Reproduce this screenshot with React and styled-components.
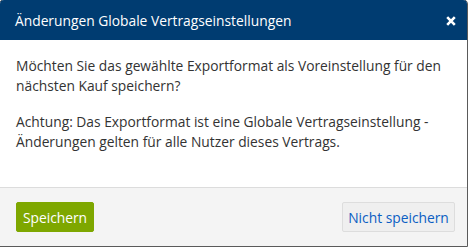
import React from "react";
import styled, { createGlobalStyle } from "styled-components";

const Global = createGlobalStyle`
  html, body { margin: 0; padding: 0; background: #ffffff; }
  body { font-family: "Open Sans", "Noto Sans", sans-serif; }
`;

const Dialog = styled.div`
  box-sizing: border-box;
  width: 469px;
  height: 248px;
  margin: -1px 0 0 -1px;
  border: 1px solid #5a5a5a;
  border-radius: 5px 5px 0 0;
  overflow: hidden;
  display: flex;
  flex-direction: column;
  background: #ffffff;
`;

const Header = styled.div`
  height: 40px;
  flex: none;
  background: #003c71;
  display: flex;
  align-items: center;
  justify-content: space-between;
  padding: 0 11px 0 15px;
`;

const Title = styled.h1`
  margin: 0;
  font-size: 13.8px;
  font-weight: 400;
  color: #ffffff;
  padding-top: 1px;
`;

const Close = styled.button`
  border: 0;
  background: transparent;
  padding: 0;
  width: 10px;
  height: 10px;
  margin-top: 1px;
  display: flex;
  cursor: pointer;
`;

const Body = styled.div`
  flex: 1;
  padding: 16px 15px 0 16px;
  border-bottom: 1px solid #dcdcdc;
`;

const Para = styled.p`
  margin: 0 0 16px;
  font-size: 13.8px;
  line-height: 20px;
  color: #333333;
`;

const Footer = styled.div`
  height: 58px;
  flex: none;
  background: #f4f4f4;
  display: flex;
  align-items: flex-start;
  justify-content: space-between;
  padding: 14px 12px 0 16px;
  box-sizing: border-box;
`;

const Button = styled.button`
  height: 30px;
  box-sizing: border-box;
  padding: 0;
  border-radius: 2px;
  font-family: "Open Sans", "Noto Sans", sans-serif;
  font-size: 13.8px;
  white-space: nowrap;
  cursor: pointer;
  border: 1px solid ${(p) => (p.$primary ? "#7ea700" : "#dddddd")};
  background: ${(p) => (p.$primary ? "#7ea700" : "#efefef")};
  color: ${(p) => (p.$primary ? "#ffffff" : "#0b5ec3")};
  width: ${(p) => p.$w}px;
`;

export default function App() {
  return (
    <>
      <Global />
      <Dialog>
        <Header>
          <Title>Änderungen Globale Vertragseinstellungen</Title>
          <Close aria-label="Schließen">
            <svg width="10" height="10" viewBox="0 0 10 10">
              <path d="M1.2 1.2 L8.8 8.8 M8.8 1.2 L1.2 8.8" stroke="#ffffff" strokeWidth="2.6" strokeLinecap="butt" />
            </svg>
          </Close>
        </Header>
        <Body>
          <Para>
            Möchten Sie das gewählte Exportformat als Voreinstellung für den nächsten Kauf speichern?
          </Para>
          <Para>
            Achtung: Das Exportformat ist eine Globale Vertragseinstellung - Änderungen gelten für alle Nutzer dieses Vertrags.
          </Para>
        </Body>
        <Footer>
          <Button $primary $w={78}>Speichern</Button>
          <Button $w={113}>Nicht speichern</Button>
        </Footer>
      </Dialog>
    </>
  );
}
